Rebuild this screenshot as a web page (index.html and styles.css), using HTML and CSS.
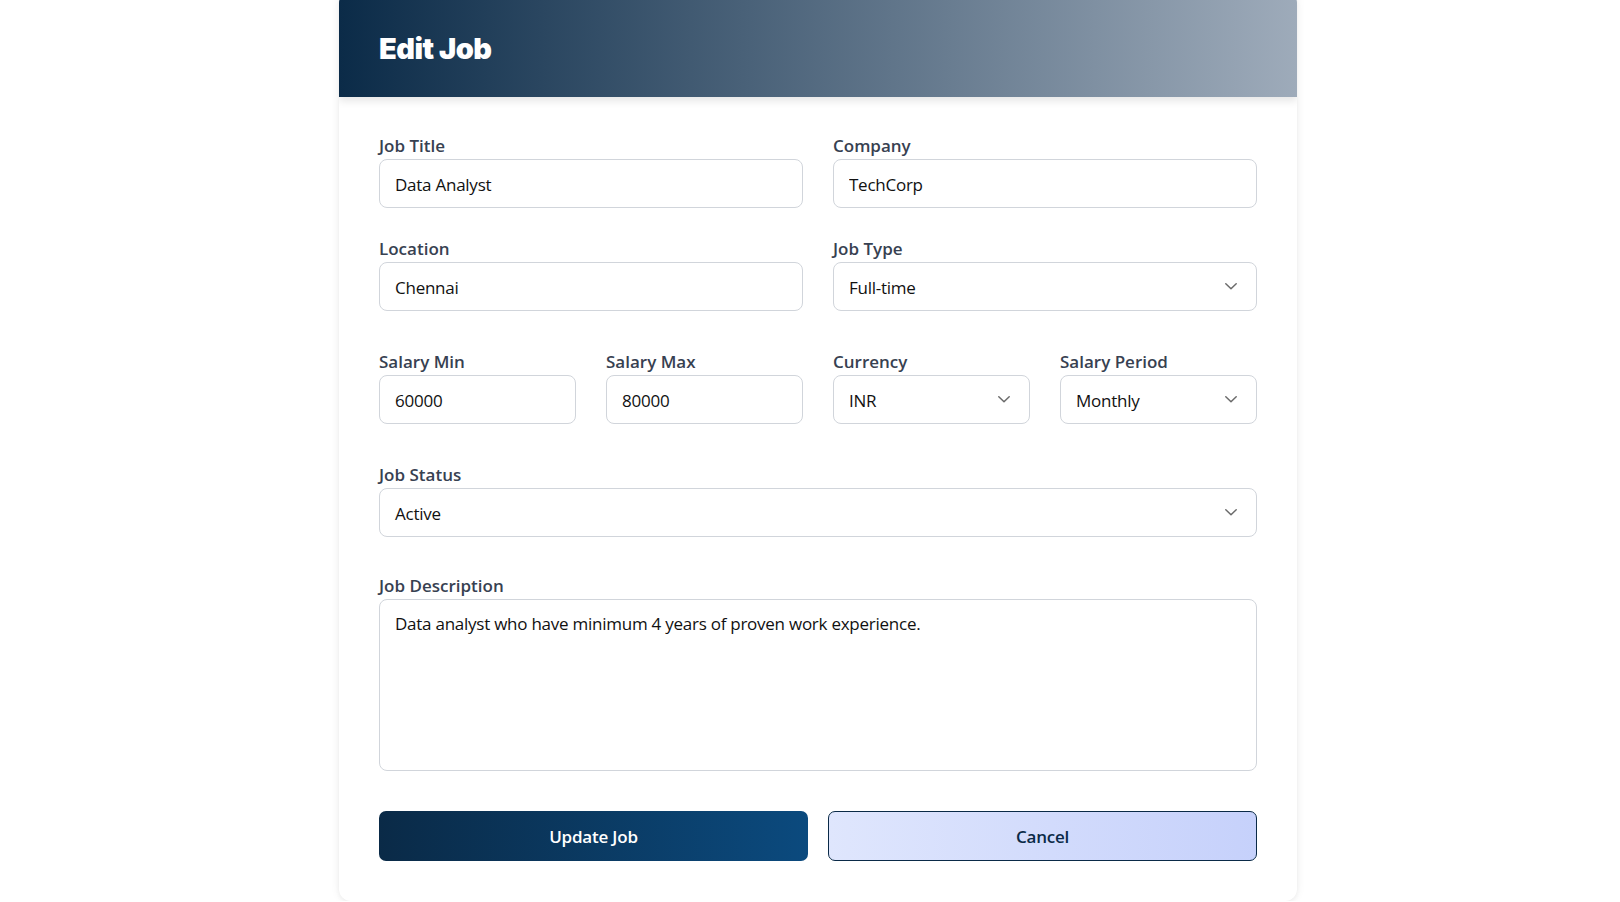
FILE: index.html
```html
<!DOCTYPE html>
<html lang="en">
<head>
<meta charset="utf-8">
<title>Edit Job</title>
<link rel="stylesheet" href="styles.css">
</head>
<body>
<div class="page">
  <div class="card">
    <div class="card-header">
      <h1 class="card-title">Edit Job</h1>
    </div>
    <form class="card-body">
      <div class="grid grid-two">
        <div class="field">
          <label class="label">Job Title</label>
          <input class="control" type="text" value="Data Analyst">
        </div>
        <div class="field">
          <label class="label">Company</label>
          <input class="control" type="text" value="TechCorp">
        </div>
        <div class="field">
          <label class="label">Location</label>
          <input class="control" type="text" value="Chennai">
        </div>
        <div class="field">
          <label class="label">Job Type</label>
          <div class="control select"><span>Full-time</span><svg class="chev" width="12" height="7" viewBox="0 0 12 7"><path d="M0.8 0.8 L6 5.8 L11.2 0.8" fill="none" stroke="#6b6b6b" stroke-width="1.5" stroke-linecap="round" stroke-linejoin="round"/></svg></div>
        </div>
      </div>

      <div class="grid grid-four section">
        <div class="field">
          <label class="label">Salary Min</label>
          <input class="control" type="text" value="60000">
        </div>
        <div class="field">
          <label class="label">Salary Max</label>
          <input class="control" type="text" value="80000">
        </div>
        <div class="field">
          <label class="label">Currency</label>
          <div class="control select"><span>INR</span><svg class="chev" width="12" height="7" viewBox="0 0 12 7"><path d="M0.8 0.8 L6 5.8 L11.2 0.8" fill="none" stroke="#6b6b6b" stroke-width="1.5" stroke-linecap="round" stroke-linejoin="round"/></svg></div>
        </div>
        <div class="field">
          <label class="label">Salary Period</label>
          <div class="control select"><span>Monthly</span><svg class="chev" width="12" height="7" viewBox="0 0 12 7"><path d="M0.8 0.8 L6 5.8 L11.2 0.8" fill="none" stroke="#6b6b6b" stroke-width="1.5" stroke-linecap="round" stroke-linejoin="round"/></svg></div>
        </div>
      </div>

      <div class="field section">
        <label class="label">Job Status</label>
        <div class="control select"><span>Active</span><svg class="chev" width="12" height="7" viewBox="0 0 12 7"><path d="M0.8 0.8 L6 5.8 L11.2 0.8" fill="none" stroke="#6b6b6b" stroke-width="1.5" stroke-linecap="round" stroke-linejoin="round"/></svg></div>
      </div>

      <div class="field section section-desc">
        <label class="label">Job Description</label>
        <textarea class="control textarea">Data analyst who have minimum 4 years of proven work experience.</textarea>
      </div>

      <div class="actions section">
        <button type="button" class="btn btn-primary">Update Job</button>
        <button type="button" class="btn btn-secondary">Cancel</button>
      </div>
    </form>
  </div>
</div>
</body>
</html>
```
FILE: styles.css
```css
* {
  box-sizing: border-box;
}

html, body {
  margin: 0;
  padding: 0;
  background: #ffffff;
}

body {
  font-family: "Open Sans", "Noto Sans", sans-serif;
  color: #111111;
  overflow: hidden;
}

.page {
  display: flex;
  justify-content: center;
  padding-left: 16px;
}

.card {
  width: 958px;
  margin-top: -9px;
  background: #ffffff;
  border-radius: 12px;
  box-shadow: 0 0 10px rgba(0, 0, 0, 0.07), 0 2px 4px rgba(0, 0, 0, 0.04);
  overflow: hidden;
}

.card-header {
  height: 106px;
  padding: 11px 40px 0 40px;
  display: flex;
  align-items: center;
  background: linear-gradient(90deg, #0b2b48 0%, #9eabba 100%);
  box-shadow: 0 4px 8px rgba(0, 0, 0, 0.10);
  position: relative;
}

.card-title {
  margin: 0;
  font-family: Inter, Lato, "Open Sans", sans-serif;
  font-weight: 900;
  font-size: 29px;
  line-height: 1.2;
  color: #ffffff;
  letter-spacing: -0.5px;
}

.card-body {
  display: block;
  padding: 38px 40px 40px 40px;
}

.grid {
  display: grid;
  column-gap: 30px;
}

.grid-two {
  grid-template-columns: 1fr 1fr;
  row-gap: 30px;
}

.grid-four {
  grid-template-columns: repeat(4, 1fr);
}

.section {
  margin-top: 40px;
}

.section-desc {
  margin-top: 38px;
}

.field {
  display: flex;
  flex-direction: column;
  min-width: 0;
}

.label {
  display: block;
  font-size: 17px;
  line-height: 22px;
  font-weight: 600;
  color: #374151;
  margin-bottom: 2px;
}

.control {
  width: 100%;
  height: 49px;
  padding: 2px 15px 0 15px;
  border: 1px solid #d1d5db;
  border-radius: 8px;
  background: #ffffff;
  font-family: "Open Sans", "Noto Sans", sans-serif;
  font-size: 17px;
  letter-spacing: -0.25px;
  color: #111111;
  outline: none;
  margin: 0;
}

.select {
  display: flex;
  align-items: center;
  justify-content: space-between;
  padding-right: 19px;
}

.chev {
  display: block;
  flex: none;
  margin-top: -2px;
}

.textarea {
  height: 172px;
  padding: 12px 15px;
  line-height: normal;
  resize: none;
  display: block;
}

.actions {
  display: grid;
  grid-template-columns: 1fr 1fr;
  column-gap: 20px;
}

.btn {
  height: 50px;
  border-radius: 7px;
  font-family: "Open Sans", "Noto Sans", sans-serif;
  font-size: 17px;
  letter-spacing: -0.2px;
  font-weight: 600;
  cursor: pointer;
}

.btn-primary {
  border: none;
  color: #ffffff;
  background: linear-gradient(90deg, #0a2a47 0%, #0b4a7e 100%);
}

.btn-secondary {
  border: 1px solid #0a2a47;
  color: #0a2a47;
  background: linear-gradient(90deg, #dfe6fd 0%, #c6d1fb 100%);
}
```
